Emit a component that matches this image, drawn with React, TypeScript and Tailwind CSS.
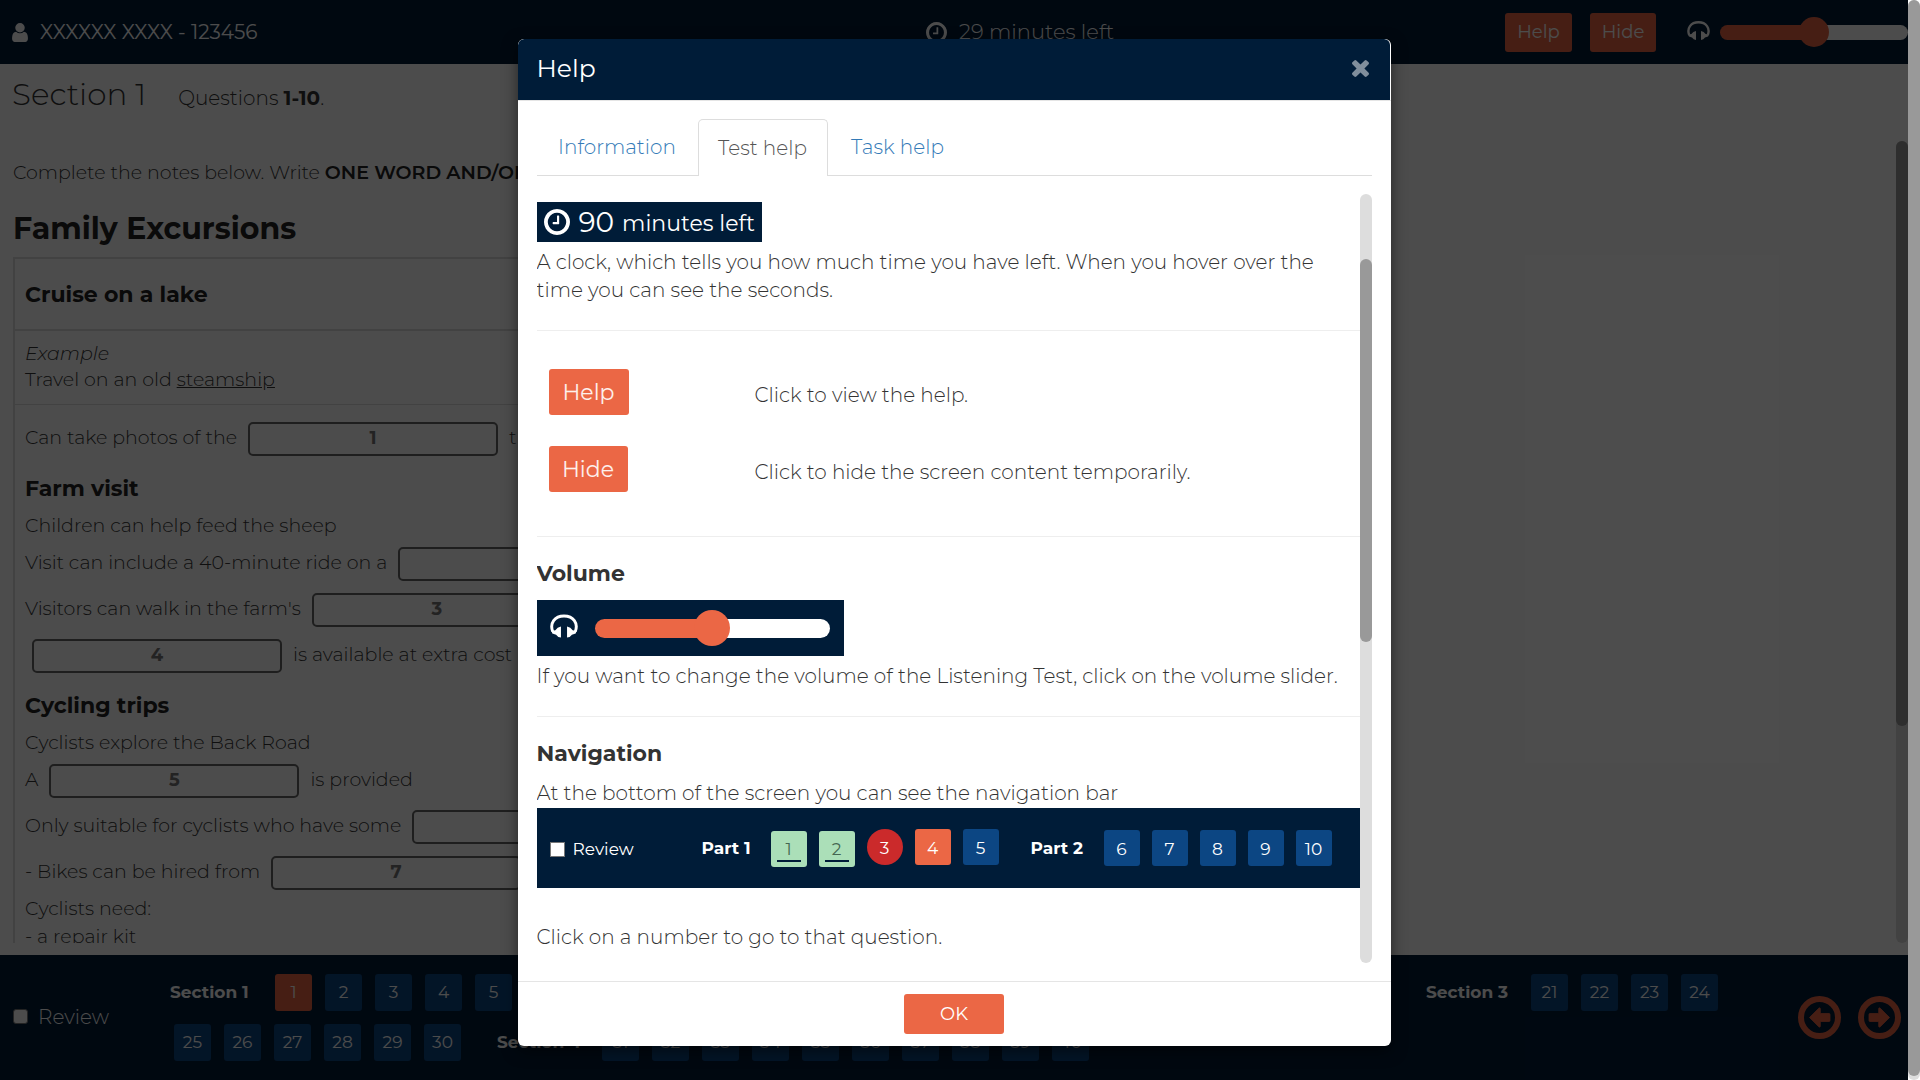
import React from "react";

function Glyph({ d, viewBox, className }: { d: string; viewBox: string; className: string }) {
  return (
    <svg viewBox={viewBox} className={className} fill="currentColor" aria-hidden="true">
      <path d={d} transform="scale(1,-1)" />
    </svg>
  );
}

const ClockIcon = ({ className }: { className: string }) => (
  <Glyph
    className={className}
    viewBox="0 -1408 1536 1536"
    d="M896 992v-448q0 -14 -9 -23t-23 -9h-320q-14 0 -23 9t-9 23v64q0 14 9 23t23 9h224v352q0 14 9 23t23 9h64q14 0 23 -9t9 -23zM1312 640q0 148 -73 273t-198 198t-273 73t-273 -73t-198 -198t-73 -273t73 -273t198 -198t273 -73t273 73t198 198t73 273zM1536 640q0 -209 -103 -385.5t-279.5 -279.5t-385.5 -103t-385.5 103t-279.5 279.5t-103 385.5t103 385.5t279.5 279.5t385.5 103t385.5 -103t279.5 -279.5t103 -385.5z"
  />
);

const UserIcon = ({ className }: { className: string }) => (
  <Glyph
    className={className}
    viewBox="0 -1408 1280 1536"
    d="M1280 137q0 -109 -62.5 -187t-150.5 -78h-854q-88 0 -150.5 78t-62.5 187q0 85 8.5 160.5t31.5 152t58.5 131t94 89t134.5 34.5q131 -128 313 -128t313 128q76 0 134.5 -34.5t94 -89t58.5 -131t31.5 -152t8.5 -160.5zM1024 1024q0 -159 -112.5 -271.5t-271.5 -112.5t-271.5 112.5t-112.5 271.5t112.5 271.5t271.5 112.5t271.5 -112.5t112.5 -271.5z"
  />
);

function HeadphonesIcon({ className }: { className: string }) {
  return (
    <svg viewBox="0 0 23 19" className={className} aria-hidden="true">
      <path d="M2.2 14C-0.4 7.2 3.8 1.3 11.5 1.3S23.4 7.2 20.8 14" fill="none" stroke="currentColor" strokeWidth="2.4" />
      <path
        d="M1.2 13.6L4.4 13Q6 10.6 9 10V19Q6.4 18.8 5 16.6L1.9 15.6ZM21.8 13.6L18.6 13Q17 10.6 14 10V19Q16.6 18.8 18 16.6L21.1 15.6Z"
        fill="currentColor"
      />
    </svg>
  );
}

const CloseIcon = ({ className }: { className: string }) => (
  <Glyph
    className={className}
    viewBox="110 -1170 1188 1188"
    d="M1298 214q0 -40 -28 -68l-136 -136q-28 -28 -68 -28t-68 28l-294 294l-294 -294q-28 -28 -68 -28t-68 28l-136 136q-28 28 -28 68t28 68l294 294l-294 294q-28 28 -28 68t28 68l136 136q28 28 68 28t68 -28l294 -294l294 294q28 28 68 28t68 -28l136 -136q28 -28 28 -68t-28 -68l-294 -294l294 -294q28 -28 28 -68z"
  />
);

function ArrowCircle({ right }: { right?: boolean }) {
  return (
    <svg viewBox="0 0 43 43" className={right ? "size-[43px] rotate-180" : "size-[43px]"} aria-hidden="true">
      <circle cx="21.5" cy="21.5" r="18.5" fill="none" stroke="currentColor" strokeWidth="6" />
      <path
        d="M11.5 21.5L20.8 12.2Q22.3 11.2 22.3 13V17.5H31Q32 17.5 32 18.5V24.5Q32 25.5 31 25.5H22.3V30Q22.3 31.8 20.8 30.8Z"
        fill="currentColor"
        stroke="currentColor"
        strokeWidth="0.8"
      />
    </svg>
  );
}

function Section({ name, from, to, current }: { name?: string; from: number; to: number; current?: number }) {
  const numbers = Array.from({ length: to - from + 1 }, (_, i) => from + i);
  return (
    <div className="flex items-center">
      {name && <span className="w-[105px] shrink-0 text-[17px] font-bold">{name}</span>}
      <div className="flex gap-[13px]">
        {numbers.map((n) => (
          <button
            key={n}
            className={
              n === current
                ? "size-[37px] rounded-[3px] bg-[#eb6745] text-[17px]"
                : "size-[37px] rounded-[3px] bg-[#0c4683] text-[17px]"
            }
          >
            {n}
          </button>
        ))}
      </div>
    </div>
  );
}

function Gap({ n }: { n: number }) {
  return (
    <input
      aria-label={`Answer ${n}`}
      placeholder={String(n)}
      className="mx-[11px] mt-0.5 h-[34px] w-[250px] shrink-0 rounded-[5px] border-2 border-[#666] bg-white pb-0.5 text-center text-lg font-bold placeholder:text-[#777]"
    />
  );
}

const Row = ({ children }: { children: React.ReactNode }) => (
  <div className="flex h-[46px] items-center whitespace-nowrap">{children}</div>
);
const Line = ({ children }: { children: React.ReactNode }) => <p className="h-7 leading-7">{children}</p>;
const Heading = ({ children }: { children: React.ReactNode }) => (
  <h3 className="mt-[5px] text-[22px] leading-[46px] font-bold text-[#222]">{children}</h3>
);

function TestPage() {
  return (
    <div className="flex h-full flex-col">
      <header className="flex h-16 shrink-0 items-center bg-[#001c38] pl-3 text-white">
        <div className="flex w-[48%] items-center gap-3 text-xl">
          <UserIcon className="h-[19px] w-4" />
          XXXXXX XXXX - 123456
        </div>
        <div className="flex items-center gap-3 pl-1 text-[21px] font-light">
          <ClockIcon className="size-[21px]" />
          29 minutes left
        </div>
        <div className="ml-auto flex items-center">
          <button className="h-[39px] w-[67px] rounded-[3px] bg-[#eb6745] text-lg">Help</button>
          <button className="mr-[31px] ml-[18px] h-[39px] w-[66px] rounded-[3px] bg-[#eb6745] text-lg">Hide</button>
          <HeadphonesIcon className="mr-2.5 mb-1 h-[19px] w-[23px]" />
          <input
            type="range"
            aria-label="Volume"
            defaultValue={50}
            className="h-[15px] w-[188px] appearance-none rounded-full bg-[linear-gradient(to_right,#eb6745_50%,#fff_50%)] [&::-webkit-slider-thumb]:size-[30px] [&::-webkit-slider-thumb]:appearance-none [&::-webkit-slider-thumb]:rounded-full [&::-webkit-slider-thumb]:bg-[#eb6745]"
          />
        </div>
      </header>

      <main className="flex min-h-0 flex-1 flex-col pb-3 text-[19px] font-light text-[#333]">
        <div className="flex h-[77px] shrink-0 items-baseline gap-8 pt-2 pl-3">
          <h1 className="text-[31px] leading-[44px] font-light">Section 1</h1>
          <p className="text-xl">
            Questions <strong className="font-bold">1-10</strong>.
          </p>
        </div>
        <div className="flex min-h-0 flex-1">
          <div className="min-w-0 flex-1 overflow-hidden pt-[18px] pl-[13px]">
            <p className="leading-7">
              Complete the notes below. Write <strong className="font-semibold text-[#222]">ONE WORD AND/OR A NUMBER</strong> for each answer.
            </p>
            <h2 className="mt-5 text-3xl leading-[44px] font-bold text-[#222]">Family Excursions</h2>
            <div className="mt-1.5 w-1/2 border-2 border-[#ddd]">
              <h3 className="border-b-2 border-[#ddd] pt-0.5 pl-2.5 text-[22px] leading-[68px] font-bold text-[#222]">Cruise on a lake</h3>
              <div className="h-[74px] border-b border-[#ddd] pt-2.5 pl-2.5 leading-[26px]">
                <p className="italic">Example</p>
                <p>
                  Travel on an old <u>steamship</u>
                </p>
              </div>
              <div className="pt-2.5 pl-2.5">
                <Row>Can take photos of the <Gap n={1} /> that surround the lake</Row>
                <Heading>Farm visit</Heading>
                <Line>Children can help feed the sheep</Line>
                <Row>Visit can include a 40-minute ride on a <Gap n={2} /></Row>
                <Row>Visitors can walk in the farm's <Gap n={3} /> by the lake</Row>
                <Row>
                  <span className="-ml-1" />
                  <Gap n={4} /> is available at extra cost
                </Row>
                <Heading>Cycling trips</Heading>
                <Line>Cyclists explore the Back Road</Line>
                <Row>A <Gap n={5} /> is provided</Row>
                <Row>Only suitable for cyclists who have some <Gap n={6} /></Row>
                <Row>- Bikes can be hired from <Gap n={7} /></Row>
                <Line>Cyclists need:</Line>
                <Line>- a repair kit</Line>
              </div>
            </div>
          </div>
          <div className="w-3 rounded-full bg-[#ddd]">
            <div className="h-[73%] rounded-full bg-[#999]" />
          </div>
        </div>
      </main>

      <footer className="flex h-[125px] shrink-0 items-center bg-[#001c38] pl-[13px] text-white">
        <label className="flex w-[157px] items-center gap-2.5 pb-0.5 text-xl font-light">
          <input type="checkbox" className="size-[15px] appearance-none rounded-[3px] border border-[#767676] bg-white" />
          Review
        </label>
        <div className="flex flex-1 flex-col gap-[13px]">
          <div className="flex gap-9">
            <Section name="Section 1" from={1} to={10} current={1} />
            <Section name="Section 2" from={11} to={20} />
            <Section name="Section 3" from={21} to={24} />
          </div>
          <div className="flex gap-9 pl-1">
            <Section from={25} to={30} />
            <Section name="Section 4" from={31} to={40} />
          </div>
        </div>
        <div className="flex gap-[17px] pr-[7px] text-[#eb6745]">
          <button aria-label="Previous">
            <ArrowCircle />
          </button>
          <button aria-label="Next">
            <ArrowCircle right />
          </button>
        </div>
      </footer>
    </div>
  );
}

const SAMPLE = {
  green: "relative mt-0.5 size-9 rounded-[3px] bg-[#abdfb8] text-[#446650]",
  red: "size-9 rounded-full bg-[#cb2a2b] pt-0.5",
  orange: "size-9 rounded-[3px] bg-[#eb6745] pt-0.5",
  blue: "size-9 rounded-[3px] bg-[#0c4683] pt-0.5",
};

function Sample({ n, kind }: { n: number; kind: keyof typeof SAMPLE }) {
  return (
    <button className={SAMPLE[kind]}>
      {n}
      {kind === "green" && <span className="absolute inset-x-1.5 bottom-[5px] h-0.5 bg-[#001c38]" />}
    </button>
  );
}

function HelpDialog() {
  return (
    <section
      role="dialog"
      aria-labelledby="help-title"
      className="mt-[39px] w-[873px] max-w-full self-start overflow-hidden rounded-md bg-white text-[#333] shadow-[0_5px_15px_rgba(0,0,0,0.5)]"
    >
      <div className="mr-px flex h-[61px] items-center justify-between rounded-t-md bg-[#001c38] pr-[21px] pb-0.5 pl-[19px] text-white">
        <h2 id="help-title" className="text-[25px]">Help</h2>
        <button aria-label="Close" className="text-[#808e9c]">
          <CloseIcon className="size-[17px]" />
        </button>
      </div>
      <div className="border-y border-[#e5e5e5] px-[19px] py-[18px]">
        <div className="flex border-b border-[#ddd] text-xl leading-[56px] font-light text-[#337ab7]">
          <a href="#information" className="w-[161px] text-center">Information</a>
          <a href="#test-help" className="-mb-px w-[130px] rounded-t-[5px] border border-b-0 border-[#ddd] bg-white text-center text-[#555]">
            Test help
          </a>
          <a href="#task-help" className="w-[140px] text-center">Task help</a>
        </div>
        <div className="mt-[18px] flex h-[769px]">
          <div className="min-w-0 flex-1 overflow-hidden pt-2 text-xl leading-7 font-light">
            <div className="flex h-10 w-[225px] items-center bg-[#001c38] pl-[7px] text-white">
              <ClockIcon className="size-[26px]" />
              <span className="pl-[9px] text-[28px] font-normal">90</span>
              <span className="pt-1 pl-2 text-[22px] font-normal">minutes left</span>
            </div>
            <p className="mt-1.5">
              A clock, which tells you how much time you have left. When you hover over the time you can see the seconds.
            </p>
            <hr className="mt-[26px] border-[#eee]" />
            <div className="mt-[38px] grid grid-cols-[206px_1fr] items-center gap-y-[31px] pl-3">
              <button className="h-[46px] w-20 rounded-[3px] bg-[#eb6745] pt-0.5 text-[22px] font-normal text-white/90">Help</button>
              <span className="pt-1.5">Click to view the help.</span>
              <button className="h-[46px] w-[79px] rounded-[3px] bg-[#eb6745] pt-0.5 text-[22px] font-normal text-white/90">Hide</button>
              <span className="pt-1.5">Click to hide the screen content temporarily.</span>
            </div>
            <hr className="mt-11 border-[#eee]" />
            <h3 className="mt-[23px] text-[22px] font-bold">Volume</h3>
            <div className="mt-3 flex h-14 w-[307px] items-center bg-[#001c38] pl-[13px] text-white">
              <HeadphonesIcon className="mr-[17px] mb-1 h-6 w-7" />
              <input
                type="range"
                aria-label="Volume example"
                defaultValue={50}
                className="h-[19px] w-[235px] appearance-none rounded-full bg-[linear-gradient(to_right,#eb6745_50%,#fff_50%)] [&::-webkit-slider-thumb]:size-9 [&::-webkit-slider-thumb]:appearance-none [&::-webkit-slider-thumb]:rounded-full [&::-webkit-slider-thumb]:bg-[#eb6745]"
              />
            </div>
            <p className="mt-1.5">If you want to change the volume of the Listening Test, click on the volume slider.</p>
            <hr className="mt-[26px] border-[#eee]" />
            <h3 className="mt-[23px] text-[22px] font-bold">Navigation</h3>
            <p className="mt-[11px]">At the bottom of the screen you can see the navigation bar</p>
            <div className="mt-px flex h-20 items-center bg-[#001c38] pl-[13px] text-[17px] font-normal text-white">
              <label className="flex w-[152px] items-center gap-2 pt-0.5">
                <input type="checkbox" className="size-[15px] appearance-none border border-[#767676] bg-white" />
                Review
              </label>
              <span className="w-[69px] font-bold">Part 1</span>
              <div className="flex gap-3">
                <Sample n={1} kind="green" />
                <Sample n={2} kind="green" />
                <Sample n={3} kind="red" />
                <Sample n={4} kind="orange" />
                <Sample n={5} kind="blue" />
              </div>
              <span className="ml-8 w-[73px] font-bold">Part 2</span>
              <div className="flex gap-3">
                {[6, 7, 8, 9, 10].map((n) => (
                  <Sample key={n} n={n} kind="blue" />
                ))}
              </div>
            </div>
            <p className="mt-[35px]">Click on a number to go to that question.</p>
          </div>
          <div className="w-3 rounded-full bg-[#ddd] pt-[65px]">
            <div className="h-[383px] rounded-full bg-[#999]" />
          </div>
        </div>
      </div>
      <div className="flex justify-center py-3">
        <button className="h-10 w-[100px] rounded-[3px] bg-[#eb6745] text-lg text-white">OK</button>
      </div>
    </section>
  );
}

export default function App() {
  return (
    <div className="flex h-screen overflow-hidden bg-white font-['Montserrat','Inter',sans-serif]">
      <div className="relative min-w-0 flex-1">
        <TestPage />
        <div className="absolute inset-0 flex justify-center bg-black/70">
          <HelpDialog />
        </div>
      </div>
      <div className="w-3 rounded-full bg-[#ddd] pb-1">
        <div className="h-full rounded-full bg-[#999]" />
      </div>
    </div>
  );
}
